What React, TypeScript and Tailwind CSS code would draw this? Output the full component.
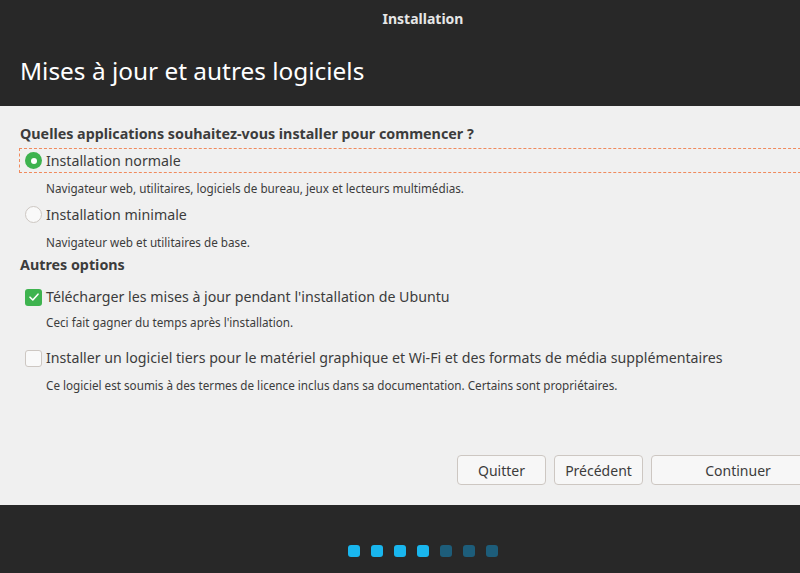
import React from 'react'

const font = { fontFamily: '"Noto Sans", "Open Sans", sans-serif' }

function Radio({ checked }: { checked?: boolean }) {
  if (checked) {
    return (
      <span className="flex h-[17px] w-[17px] items-center justify-center rounded-full bg-[#3eb34f]">
        <span className="h-[6px] w-[6px] rounded-full bg-white" />
      </span>
    )
  }
  return <span className="h-[17px] w-[17px] rounded-full border border-[#cdc7c2] bg-[#f9f9f9]" />
}

function Check({ checked }: { checked?: boolean }) {
  if (checked) {
    return (
      <span className="flex h-[17px] w-[17px] items-center justify-center rounded-[3px] bg-[#3eb34f]">
        <svg width="12" height="12" viewBox="0 0 12 12" fill="none">
          <path d="M2 6.2 L4.8 9 L10 3.2" stroke="white" strokeWidth="1.6" strokeLinecap="round" strokeLinejoin="round" />
        </svg>
      </span>
    )
  }
  return <span className="h-[17px] w-[17px] rounded-[3px] border border-[#cdc7c2] bg-[#f9f9f9]" />
}

export default function App() {
  const dots = [true, true, true, true, false, false, false]
  return (
    <div className="h-[573px] w-[800px] overflow-hidden bg-[#282828]" style={font}>
      <div className="flex h-[573px] w-[846px] flex-col">
        <div className="flex h-[37px] items-center justify-center text-[14px] font-bold text-[#e6e6e6]">
          Installation
        </div>
        <div className="flex h-[69px] items-center px-5 text-[24.4px] text-white">
          Mises à jour et autres logiciels
        </div>
        <div className="flex h-[399px] flex-col bg-[#f0f0f0] pl-5 text-[#3c3c3c]">
          <div className="mt-[17px] text-[14.3px] font-bold leading-[22px]">
            Quelles applications souhaitez-vous installer pour commencer ?
          </div>
          <div className="ml-[-1px] mt-[3px] flex h-[25px] items-center gap-[4px] border border-dashed border-[#f08a5d] pl-[5px] text-[14.2px]">
            <Radio checked />
            <span>Installation normale</span>
          </div>
          <div className="ml-[26px] mt-[5px] text-[11.7px] leading-[20px]">
            Navigateur web, utilitaires, logiciels de bureau, jeux et lecteurs multimédias.
          </div>
          <div className="mt-[4px] flex h-[25px] items-center gap-[4px] pl-[5px] text-[14.2px]">
            <Radio />
            <span>Installation minimale</span>
          </div>
          <div className="ml-[26px] mt-[5px] text-[11.7px] leading-[20px]">Navigateur web et utilitaires de base.</div>
          <div className="mt-[2px] text-[14.3px] font-bold leading-[22px]">Autres options</div>
          <div className="mt-[9px] flex h-[24px] items-center gap-[4px] pl-[5px] text-[14.2px]">
            <Check checked />
            <span>Télécharger les mises à jour pendant l'installation de Ubuntu</span>
          </div>
          <div className="ml-[26px] mt-[3px] text-[11.7px] leading-[20px]">Ceci fait gagner du temps après l'installation.</div>
          <div className="mt-[14px] flex h-[24px] items-center gap-[4px] pl-[5px] text-[14.2px]">
            <Check />
            <span>
              Installer un logiciel tiers pour le matériel graphique et Wi-Fi et des formats de média supplémentaires
            </span>
          </div>
          <div className="ml-[26px] mt-[5px] text-[11.7px] leading-[20px]">
            Ce logiciel est soumis à des termes de licence inclus dans sa documentation. Certains sont propriétaires.
          </div>
          <div className="mt-auto mb-[20px] flex justify-end gap-[8px] pr-[21px] text-[14px]">
            <button className="h-[30px] w-[89px] rounded-[4px] border border-[#cdc7c2] bg-[#f7f7f7]">Quitter</button>
            <button className="h-[30px] w-[89px] rounded-[4px] border border-[#cdc7c2] bg-[#f7f7f7]">Précédent</button>
            <button className="h-[30px] w-[174px] rounded-[4px] border border-[#cdc7c2] bg-[#f7f7f7]">Continuer</button>
          </div>
        </div>
        <div className="flex flex-1 items-end justify-center gap-[11px] pb-[16px]">
          {dots.map((on, i) => (
            <span key={i} className={on ? 'h-[12px] w-[12px] rounded-[3px] bg-[#19b6ee]' : 'h-[12px] w-[12px] rounded-[3px] bg-[#1d5d7a]'} />
          ))}
        </div>
      </div>
    </div>
  )
}
